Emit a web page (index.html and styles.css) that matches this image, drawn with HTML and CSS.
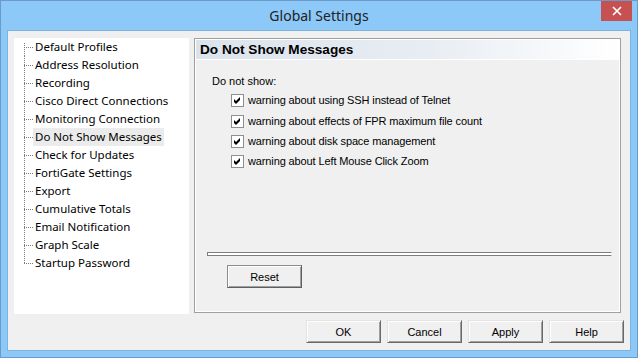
FILE: index.html
```html
<!DOCTYPE html>
<html>
<head>
<meta charset="utf-8">
<title>Global Settings</title>
<link rel="stylesheet" href="styles.css">
</head>
<body>
<div class="window">
  <div class="titlebar">
    <div class="title">Global Settings</div>
    <button class="close" aria-label="Close"><svg width="10" height="10" viewBox="0 0 10 10"><path d="M1 1L9 9M9 1L1 9" stroke="#fff" stroke-width="1.7"/></svg></button>
  </div>
  <div class="client">
    <div class="main">
      <ul class="tree">
        <li><span>Default Profiles</span></li>
        <li><span>Address Resolution</span></li>
        <li><span>Recording</span></li>
        <li><span>Cisco Direct Connections</span></li>
        <li><span>Monitoring Connection</span></li>
        <li class="sel"><span>Do Not Show Messages</span></li>
        <li><span>Check for Updates</span></li>
        <li><span>FortiGate Settings</span></li>
        <li><span>Export</span></li>
        <li><span>Cumulative Totals</span></li>
        <li><span>Email Notification</span></li>
        <li><span>Graph Scale</span></li>
        <li class="last"><span>Startup Password</span></li>
      </ul>
      <div class="panel">
        <div class="panel-head">Do Not Show Messages</div>
        <div class="panel-body">
          <div class="label">Do not show:</div>
          <div class="checks">
            <div class="check first"><span class="box"><svg width="11" height="11" viewBox="0 0 11 11"><polygon points="2,4 4,6 8,2 8,5 4,9 2,7" fill="#000"/></svg></span>warning about using SSH instead of Telnet</div>
            <div class="check"><span class="box"><svg width="11" height="11" viewBox="0 0 11 11"><polygon points="2,4 4,6 8,2 8,5 4,9 2,7" fill="#000"/></svg></span>warning about effects of FPR maximum file count</div>
            <div class="check"><span class="box"><svg width="11" height="11" viewBox="0 0 11 11"><polygon points="2,4 4,6 8,2 8,5 4,9 2,7" fill="#000"/></svg></span>warning about disk space management</div>
            <div class="check"><span class="box"><svg width="11" height="11" viewBox="0 0 11 11"><polygon points="2,4 4,6 8,2 8,5 4,9 2,7" fill="#000"/></svg></span>warning about Left Mouse Click Zoom</div>
          </div>
          <div class="sep"></div>
          <button class="btn reset">Reset</button>
        </div>
      </div>
    </div>
    <div class="buttons">
      <button class="btn">OK</button>
      <button class="btn">Cancel</button>
      <button class="btn">Apply</button>
      <button class="btn">Help</button>
    </div>
  </div>
</div>
</body>
</html>
```
FILE: styles.css
```css
* { box-sizing: border-box; }
html, body { margin: 0; padding: 0; }
body { width: 638px; height: 358px; overflow: hidden; background: #8cc8f8; }

.window {
  width: 638px;
  height: 358px;
  border: 1px solid #6c9bc9;
  background: #8cc8f8;
  display: flex;
  flex-direction: column;
}

.titlebar {
  height: 29px;
  display: grid;
  grid-template-columns: 1fr auto 1fr;
  align-items: center;
}
.title {
  grid-column: 2;
  font-family: "Noto Sans", sans-serif;
  font-size: 14px;
  color: #222;
  line-height: 20px;
}
.close {
  grid-column: 3;
  justify-self: end;
  align-self: start;
  margin: 0 5px 0 0;
  width: 31px;
  height: 20px;
  border: 0;
  padding: 0;
  background: #c75050;
  display: flex;
  align-items: center;
  justify-content: center;
}

.client {
  margin: 0 6px 6px 6px;
  border: 1px solid #7eb2df;
  background: #f0f0f0;
  height: 321px;
  padding: 7px 6px 7px 6px;
  display: flex;
  flex-direction: column;
}

.main {
  display: flex;
  align-items: flex-start;
  gap: 5px;
  height: 276px;
}

.tree {
  list-style: none;
  margin: 0;
  padding: 0;
  width: 175px;
  height: 276px;
  background: #fff;
  font-family: "Noto Sans", sans-serif;
  font-size: 11.5px;
  color: #000;
}
.tree li {
  height: 18px;
  padding-left: 19px;
  background:
    repeating-linear-gradient(to right, #7a7a7a 0 1px, transparent 1px 2px) 10px 9px / 9px 1px no-repeat,
    repeating-linear-gradient(to bottom, #7a7a7a 0 1px, transparent 1px 2px) 10px 0 / 1px 100% no-repeat;
}
.tree li:first-child {
  background:
    repeating-linear-gradient(to right, #7a7a7a 0 1px, transparent 1px 2px) 10px 9px / 9px 1px no-repeat,
    repeating-linear-gradient(to bottom, #7a7a7a 0 1px, transparent 1px 2px) 10px 5px / 1px 13px no-repeat;
}
.tree li.last {
  background:
    repeating-linear-gradient(to right, #7a7a7a 0 1px, transparent 1px 2px) 10px 9px / 9px 1px no-repeat,
    repeating-linear-gradient(to bottom, #7a7a7a 0 1px, transparent 1px 2px) 10px 0 / 1px 10px no-repeat;
}
.tree span {
  display: inline-block;
  height: 18px;
  line-height: 18px;
  padding: 0 2px;
  white-space: nowrap;
}
.tree li.sel span { background: #ebebeb; }

.panel {
  width: 427px;
  height: 275px;
  border: 1px solid #a0a0a0;
  padding: 1px;
  box-shadow: inset 0 0 0 1px #fff;
  display: flex;
  flex-direction: column;
}
.panel-head {
  height: 20px;
  flex: none;
  border-bottom: 1px solid #fff;
  background: linear-gradient(to right, #dbe3ec 0%, #e8edf3 55%, #ffffff 100%);
  font-family: "Liberation Sans", Arial, sans-serif;
  font-weight: bold;
  font-size: 13.6px;
  line-height: 19px;
  padding-left: 4px;
  color: #000;
}
.panel-body {
  flex: 1;
  display: flex;
  flex-direction: column;
  align-items: flex-start;
  padding: 15px 7px 23px 11px;
  font-family: "Liberation Sans", Arial, sans-serif;
  font-size: 11px;
  color: #000;
}
.label {
  line-height: 13px;
  margin-left: 5px;
}
.checks {
  margin-top: 6px;
  margin-left: 24px;
  display: flex;
  flex-direction: column;
  gap: 7px;
}
.check {
  display: flex;
  align-items: center;
  height: 13px;
  line-height: 13px;
  white-space: nowrap;
  letter-spacing: -0.12px;
}
.check.first { margin-bottom: 1px; }
.box {
  width: 13px;
  height: 13px;
  border: 1px solid #8e8f8f;
  background: #fff;
  margin-right: 4px;
  display: flex;
  flex: none;
}
.sep {
  margin-top: auto;
  width: 405px;
  height: 4px;
  border: 1px solid #7d7d7d;
  border-right-color: #fff;
  background: #fff;
}

.btn {
  width: 75px;
  height: 23px;
  padding: 0;
  font-family: "Liberation Sans", Arial, sans-serif;
  font-size: 11px;
  color: #000;
  background: #f0f0f0;
  border: 1px solid;
  border-color: #e3e3e3 #696969 #696969 #e3e3e3;
  box-shadow: inset 1px 1px 0 #fff, inset -1px -1px 0 #a0a0a0;
}
.reset {
  margin-top: 9px;
  margin-left: 20px;
  border-color: #8c8c8c #5e5e5e #5e5e5e #8c8c8c;
}

.buttons {
  margin-top: 6px;
  display: flex;
  justify-content: flex-end;
  gap: 6px;
}
```
